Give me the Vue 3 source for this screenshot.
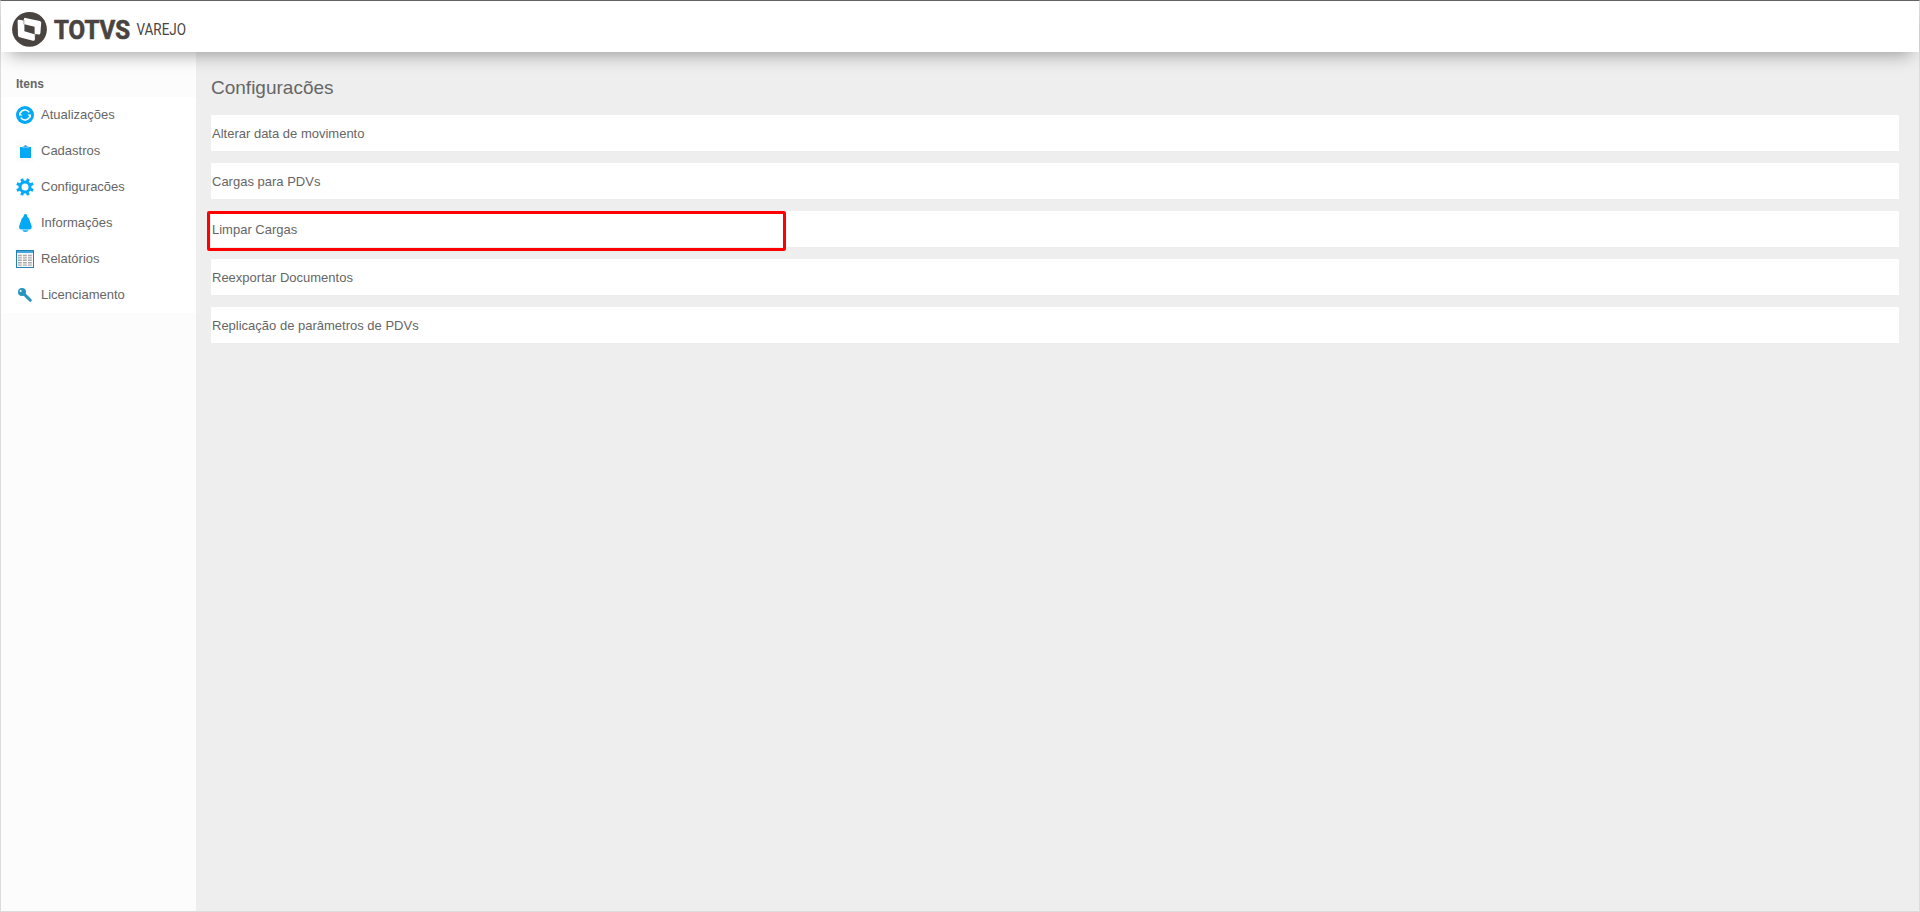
<script setup>
const menu = [
  { icon: 'update', label: 'Atualizações' },
  { icon: 'clipboard', label: 'Cadastros' },
  { icon: 'gear', label: 'Configuracões' },
  { icon: 'bell', label: 'Informações' },
  { icon: 'table', label: 'Relatórios' },
  { icon: 'key', label: 'Licenciamento' }
]

const options = [
  { label: 'Alterar data de movimento' },
  { label: 'Cargas para PDVs' },
  { label: 'Limpar Cargas', marked: true },
  { label: 'Reexportar Documentos' },
  { label: 'Replicação de parâmetros de PDVs' }
]
</script>

<template>
  <div class="window">
    <header class="topbar">
      <svg class="logo" width="220" height="51" viewBox="0 0 220 51">
        <circle cx="28.5" cy="28.3" r="17.4" fill="#4a4441" />
        <path
          d="M16.6 20 Q16.6 18.6 18 18.8 L22.6 19.5 L22.9 18 Q23.2 16.7 24.6 16.9 L38.8 19.9 Q40.3 20.3 40.2 21.8 L39.4 32 Q39.2 33.6 37.8 33.5 L34.4 33.1 L33.8 38.6 Q33.5 40.1 32 39.8 L18.6 36.2 Q17.1 35.7 17 34.2 Z"
          fill="#fff"
        />
        <path d="M23.4 23.2 L33.6 25.8 L33.6 33.2 L23.4 30.2 Z" fill="#4a4441" />
        <path d="M22.9 19 V23.4 M34 33 V36.5" stroke="#4a4441" stroke-width=".5" />
        <text class="brand" x="53" y="38.3" textLength="76" lengthAdjust="spacingAndGlyphs">TOTVS</text>
        <text class="product" x="135.5" y="33.8" textLength="49.5" lengthAdjust="spacingAndGlyphs">VAREJO</text>
      </svg>
    </header>

    <div class="body">
      <aside class="sidebar">
        <h2>Itens</h2>
        <ul>
          <li v-for="item in menu" :key="item.label">
            <svg width="18" height="22" viewBox="0 0 18 22">
              <g v-if="item.icon === 'update'">
                <circle cx="9" cy="11" r="9" fill="#03a9f4" />
                <path d="M4.2 9.6 A5 5 0 0 1 13.2 8.3 M13.8 12.4 A5 5 0 0 1 4.8 13.7" fill="none" stroke="#fff" stroke-width="1.5" />
                <path d="M3 8 V11.5 H6.5 Z M15 14 V10.5 H11.5 Z" fill="#fff" />
              </g>
              <g v-else-if="item.icon === 'clipboard'">
                <rect width="18" height="22" fill="#fcfcfc" />
                <path d="M4 7 H15 V18 H4 Z" fill="#03a9f4" />
                <path d="M6.5 7.6 V6.5 H8 Q8 5 9.5 5 Q11 5 11 6.5 H12.5 V7.6 Z" fill="#2f9be8" stroke="#d5effc" stroke-width=".4" />
              </g>
              <g v-else-if="item.icon === 'gear'" stroke="#03a9f4" fill="none">
                <circle cx="9" cy="11" r="5" stroke-width="3" />
                <path d="M9 2.2 V5 M9 17 V19.8 M.2 11 H3 M15 11 H17.8" stroke-width="3" transform="rotate(22.5 9 11)" />
                <path d="M9 2.2 V5 M9 17 V19.8 M.2 11 H3 M15 11 H17.8" stroke-width="3" transform="rotate(67.5 9 11)" />
              </g>
              <g v-else-if="item.icon === 'bell'" fill="#03a9f4">
                <path d="M8 2.5 Q9.4 1.5 10.8 2.5 L11.3 4.5 Q13.3 6.3 14 9.5 L15.8 14.5 Q16 17 13.5 17.6 H5.3 Q2.8 17 3 14.5 L4.8 9.5 Q5.5 6.3 7.5 4.5 Z" />
                <path d="M6.2 18.3 H12.6 Q11.8 20 9.4 20 Q7 20 6.2 18.3 Z" />
              </g>
              <g v-else-if="item.icon === 'table'">
                <rect x=".5" y="2.5" width="17" height="17" fill="#f7f7f7" stroke="#2282b5" />
                <path d="M1 4 H17" stroke="#45a6dc" stroke-width="2" />
                <path d="M2 7.5 H16 M2 9.9 H16 M2 12.3 H16 M2 14.7 H16 M2 17.1 H16" stroke="#aaa" stroke-width="1.4" stroke-dasharray="3.8 1.2" />
              </g>
              <g v-else>
                <path d="M8.5 10.5 L14.3 16.3" stroke="#2894c0" stroke-width="3" stroke-linecap="round" />
                <circle cx="6" cy="8" r="4" fill="#2894c0" />
                <circle cx="4.6" cy="7" r="1" fill="#fff" />
              </g>
            </svg>
            <span>{{ item.label }}</span>
          </li>
        </ul>
      </aside>

      <main class="content">
        <h1>Configuracões</h1>
        <div v-for="option in options" :key="option.label" class="option" :class="{ marked: option.marked }">
          {{ option.label }}
        </div>
      </main>
    </div>
  </div>
</template>

<style>
body {
  margin: 0;
}
</style>

<style scoped>
.window {
  box-sizing: border-box;
  height: 912px;
  display: flex;
  flex-direction: column;
  border: 1px solid #dcdcdc;
  border-top-color: #666364;
  background: #eee;
  color: #666;
  font-family: "Liberation Sans", Arial, sans-serif;
  font-size: 13px;
}

.topbar {
  position: relative;
  z-index: 1;
  height: 51px;
  background: #fff;
  box-shadow: 0 10px 18px -8px rgba(0, 0, 0, 0.38);
}

.logo {
  display: block;
}

.brand {
  font: bold 26px Roboto, sans-serif;
  fill: #4a4441;
  stroke: #4a4441;
  stroke-width: 0.7px;
}

.product {
  font: 16px Roboto, sans-serif;
  fill: #4a4441;
}

.body {
  flex: 1;
  display: flex;
}

.sidebar {
  width: 195px;
  background: #fcfcfc;
}

.sidebar h2 {
  margin: 0;
  padding: 20px 0 0 15px;
  height: 25px;
  font-size: 12px;
  line-height: 24px;
}

.sidebar ul {
  margin: 0;
  padding: 0;
  list-style: none;
  background: #fff;
}

.sidebar li {
  display: flex;
  align-items: center;
  gap: 7px;
  height: 36px;
  padding-left: 15px;
}

.sidebar li span {
  padding-bottom: 2px;
}

.content {
  flex: 1;
  padding: 21px 20px 0 15px;
}

.content h1 {
  margin: 0 0 12px;
  font-size: 19px;
  font-weight: normal;
  line-height: 30px;
}

.option {
  position: relative;
  height: 36px;
  margin-bottom: 12px;
  padding-left: 1px;
  background: #fff;
  line-height: 38px;
}

.marked::after {
  content: "";
  position: absolute;
  top: 0;
  left: -4px;
  width: 573px;
  height: 34px;
  border: 3px solid #f00;
  border-radius: 2px;
}
</style>
